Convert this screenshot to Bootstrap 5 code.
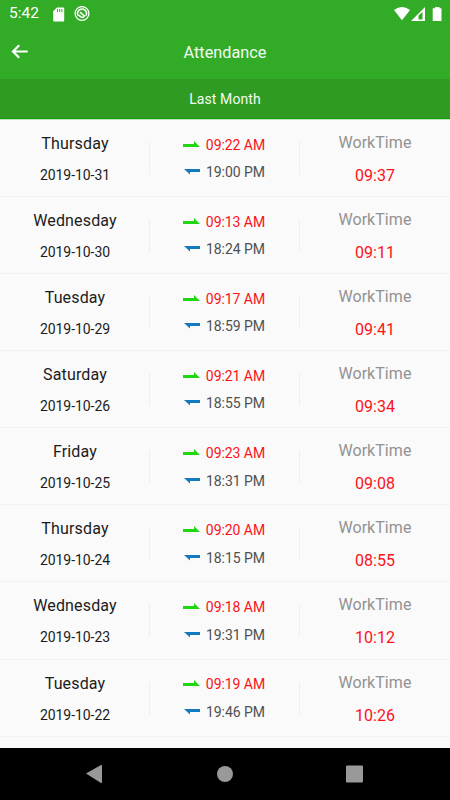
<!DOCTYPE html>
<html lang="en">
<head>
<meta charset="utf-8">
<meta name="viewport" content="width=device-width, initial-scale=1">
<title>Attendance</title>
<link rel="stylesheet" href="https://cdn.jsdelivr.net/npm/bootstrap@5.3.0/dist/css/bootstrap.min.css">
<style>
body{font-family:Roboto,sans-serif;background:#fafafa;color:#1c1c1c;height:800px}
svg{display:block;flex:none}
.top-area{background:#32ab27;color:#fff}
.status-line{height:28px;padding:0 8px 0 9px;font-size:15.5px}
.title-line{height:51px;padding-bottom:1px}
.title-line h1{font-size:16.3px;font-weight:400;line-height:20px;color:#f2fbf1}
.month-line{height:40px;padding-top:2px;background:#2f9b23;color:#f2fbf1;font-size:14px;letter-spacing:.1px;border-bottom:1px solid #139b0b}
.card-icon{margin-left:14px}
.ring-icon{margin-left:9px}
.entries{border-top:1px solid #bfe3bc}
.entry{height:77.08px;border-bottom:1px solid #f1f1f1}
.mid{height:33px;margin-top:22px;border-left:1px solid #efefef;border-right:1px solid #efefef;margin-left:-1px}
.day{font-size:16px;line-height:20px;margin-top:14px;letter-spacing:.15px}
.date{font-size:14px;line-height:18px;margin-top:12px;letter-spacing:-.05px}
.clock{font-size:14px;line-height:18px;gap:6px;letter-spacing:-.05px;margin-left:-1px}
.clock + .clock{margin-top:9.500px;color:#505050}
.red{color:#fb1218}
.wt{font-size:16px;line-height:20px;margin-top:13px;color:#929292;letter-spacing:.05px}
.total{font-size:16px;line-height:20px;margin-top:13px}
.nav-keys{height:52px;background:#000}
</style>
<script src="https://cdn.jsdelivr.net/npm/bootstrap@5.3.0/dist/js/bootstrap.bundle.min.js"></script>
</head>
<body class="d-flex flex-column overflow-hidden">
<header class="top-area flex-shrink-0">
  <div class="status-line d-flex align-items-center">
    <span>5:42</span>
    <svg class="card-icon" width="12" height="15" viewBox="0 0 12 15"><path fill="#fff" d="M4 .5h6.200q1 0 1 1v12q0 1-1 1H1.200q-1 0-1-1V4.300z"/><path stroke="#32ab27" stroke-width="1" d="M4.500 2v3M6.700 2v3M8.900 2v3"/></svg>
    <svg class="ring-icon" width="16" height="16" viewBox="0 0 16 16" fill="none" stroke="#fff"><circle cx="8" cy="7.500" r="6.900" stroke-width="1.300"/><path stroke-width="1.500" d="M4.300 9.800A4.400 4.400 0 1 1 11.800 9.800"/><path stroke-width="1.600" d="M4.500 9L7.500 11.300h2.700M6 6.200L11 10.500"/></svg>
    <svg class="ms-auto" width="48" height="15" viewBox="0 0 48 15" fill="#fff"><path d="M0 3Q8 -3 16 3L8 13.200z"/><path fill-rule="evenodd" d="M17 14L31 0v14zM24.500 8.500v4h4V4.900z"/><path d="M38.700 1.200h2.300V0h4.500v1.200H47.500v12.800h-8.800z"/></svg>
  </div>
  <div class="title-line d-flex align-items-center justify-content-between px-2">
    <svg width="24" height="20" viewBox="0 0 24 20" fill="none" stroke="#fff" stroke-width="2.200"><path d="M19.700 8.500H5M11.200 2.200L5 8.500l6.200 6.300"/></svg>
    <h1 class="m-0">Attendance</h1><svg width="24" height="20"></svg>
  </div>
  <div class="month-line d-flex align-items-center justify-content-center">Last Month</div>
</header>
<main class="entries flex-grow-1 overflow-hidden" id="entries"></main>
<footer class="nav-keys flex-shrink-0">
  <svg width="450" height="52" viewBox="0 0 450 52" fill="#999"><path d="M86 25.500L101 17q1-.3 1 .7v16.600q0 1-1 .7z"/><circle cx="225" cy="26" r="8"/><rect x="346" y="17.500" width="17" height="17" rx="1"/></svg>
</footer>
<script>
const days = [
  ['Thursday','2019-10-31','09:22','19:00','09:37'],
  ['Wednesday','2019-10-30','09:13','18:24','09:11'],
  ['Tuesday','2019-10-29','09:17','18:59','09:41'],
  ['Saturday','2019-10-26','09:21','18:55','09:34'],
  ['Friday','2019-10-25','09:23','18:31','09:08'],
  ['Thursday','2019-10-24','09:20','18:15','08:55'],
  ['Wednesday','2019-10-23','09:18','19:31','10:12'],
  ['Tuesday','2019-10-22','09:19','19:46','10:26']
];
document.getElementById('entries').innerHTML = days.map(([day,date,inn,out,total]) => `
<section class="entry row g-0 text-center">
  <div class="col-4"><div class="day">${day}</div><div class="date">${date}</div></div>
  <div class="col-4"><div class="mid d-flex flex-column justify-content-center">
    <div class="clock d-flex align-items-center justify-content-center red"><svg width="17" height="8" viewBox="0 0 17 8"><path fill="#20d610" d="M0 3h11V0L17 6H0z"/></svg>${inn} AM</div>
    <div class="clock d-flex align-items-center justify-content-center"><svg width="17" height="8" viewBox="0 0 17 8"><path fill="#147abf" d="M1 1h16v3H7V6.500z"/></svg>${out} PM</div>
  </div></div>
  <div class="col-4"><div class="wt">WorkTime</div><div class="total red">${total}</div></div>
</section>`).join('');
</script>
</body>
</html>
